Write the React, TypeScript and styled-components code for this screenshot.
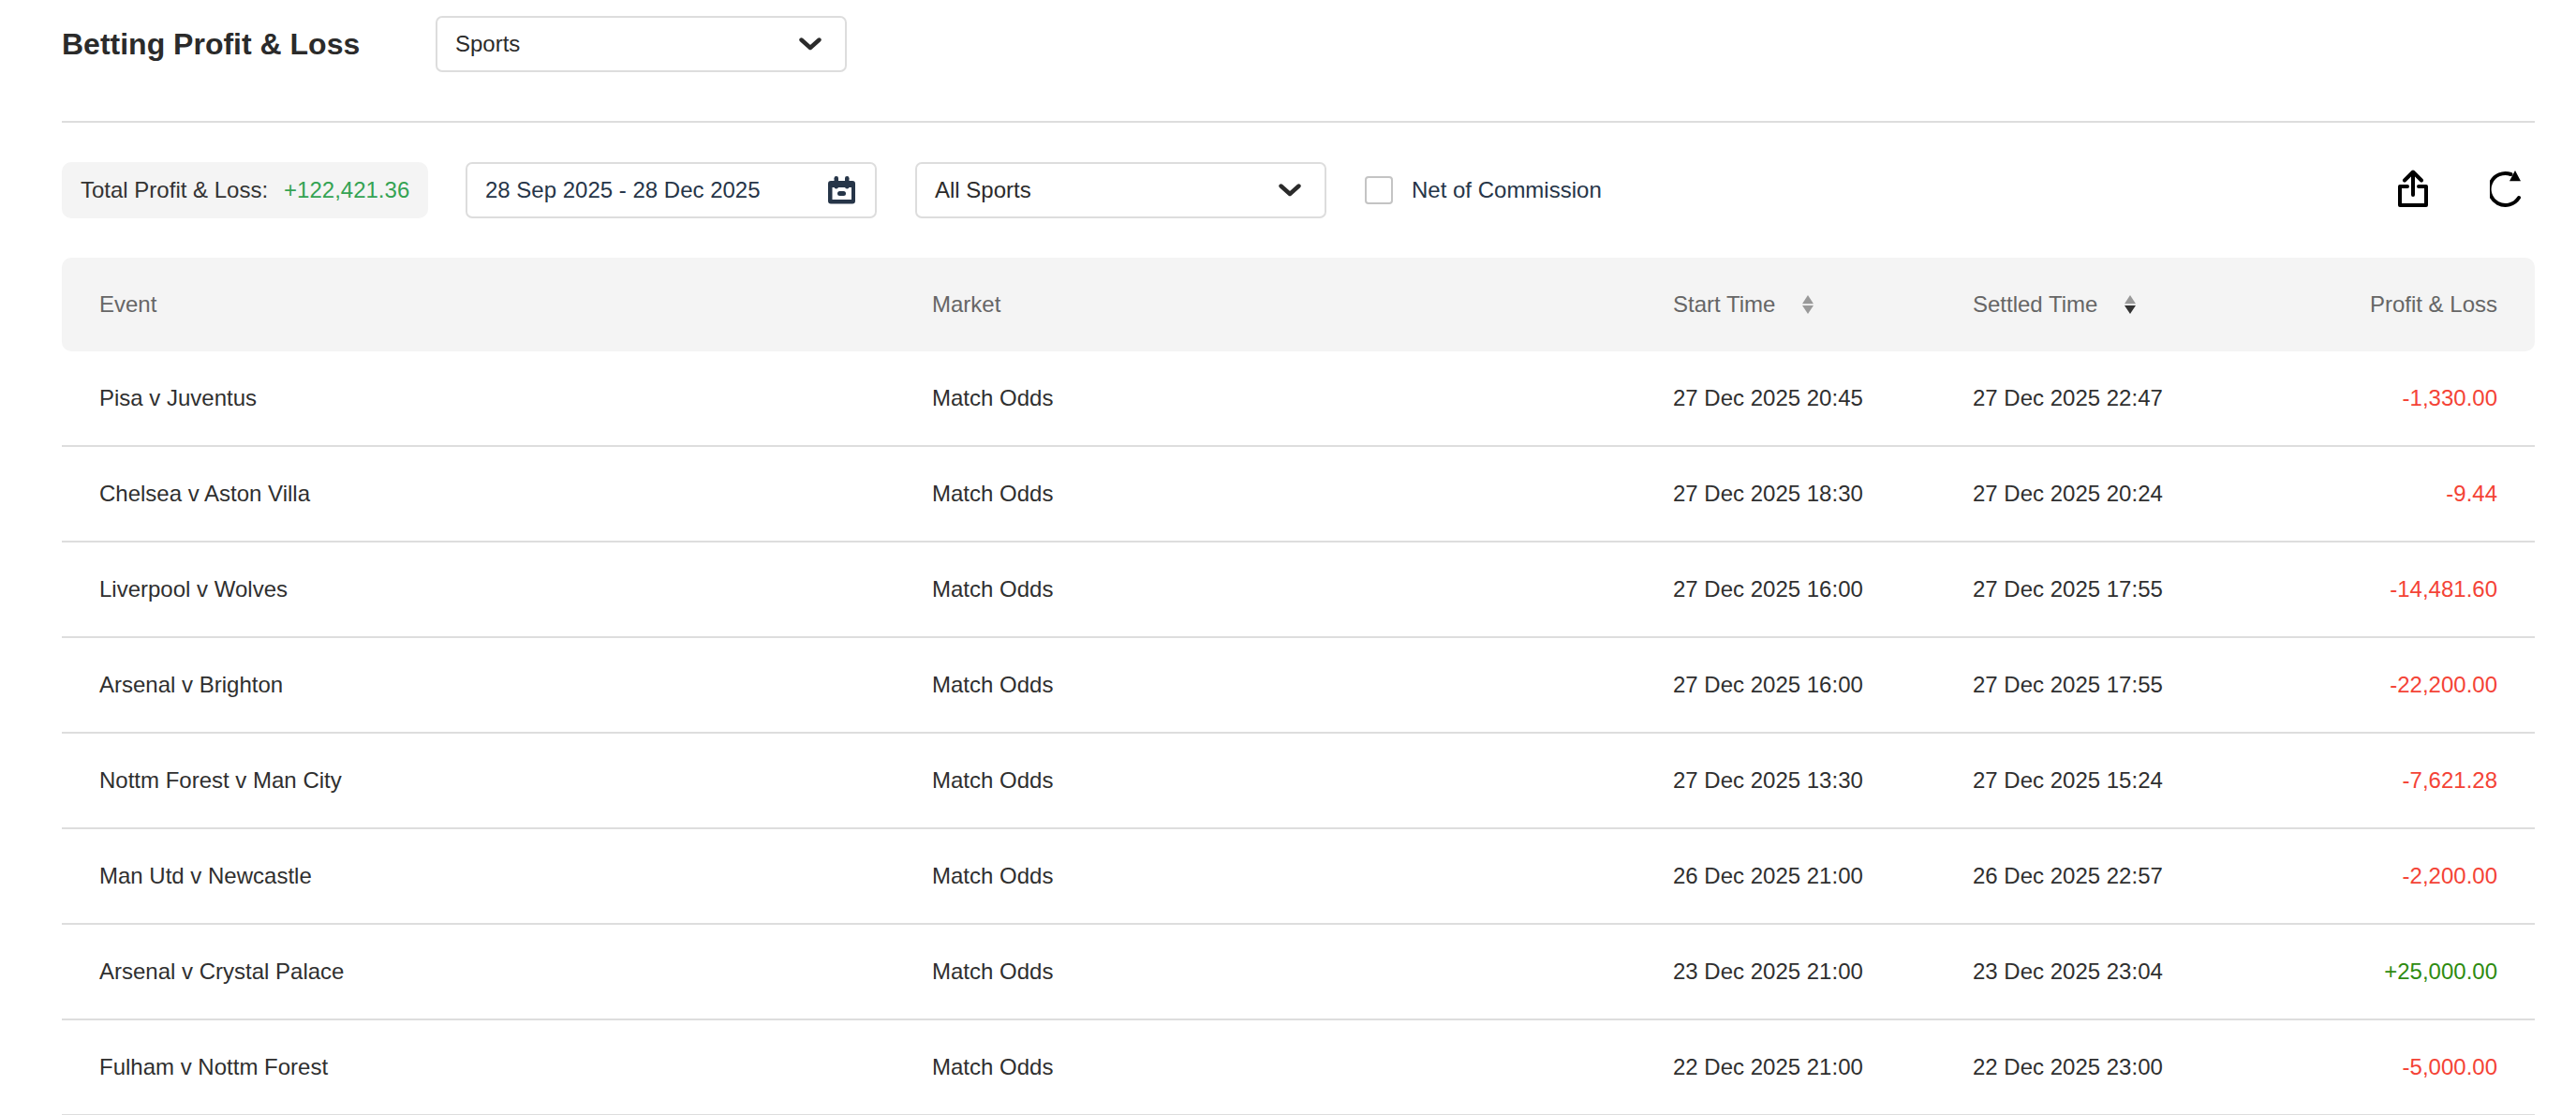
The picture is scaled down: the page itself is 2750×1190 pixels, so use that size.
import styled, { createGlobalStyle } from "styled-components";

type Row = { event: string; start: string; settled: string; pnl: string };

const rows: Row[] = [
  { event: "Pisa v Juventus", start: "27 Dec 2025 20:45", settled: "27 Dec 2025 22:47", pnl: "-1,330.00" },
  { event: "Chelsea v Aston Villa", start: "27 Dec 2025 18:30", settled: "27 Dec 2025 20:24", pnl: "-9.44" },
  { event: "Liverpool v Wolves", start: "27 Dec 2025 16:00", settled: "27 Dec 2025 17:55", pnl: "-14,481.60" },
  { event: "Arsenal v Brighton", start: "27 Dec 2025 16:00", settled: "27 Dec 2025 17:55", pnl: "-22,200.00" },
  { event: "Nottm Forest v Man City", start: "27 Dec 2025 13:30", settled: "27 Dec 2025 15:24", pnl: "-7,621.28" },
  { event: "Man Utd v Newcastle", start: "26 Dec 2025 21:00", settled: "26 Dec 2025 22:57", pnl: "-2,200.00" },
  { event: "Arsenal v Crystal Palace", start: "23 Dec 2025 21:00", settled: "23 Dec 2025 23:04", pnl: "+25,000.00" },
  { event: "Fulham v Nottm Forest", start: "22 Dec 2025 21:00", settled: "22 Dec 2025 23:00", pnl: "-5,000.00" },
];

const GlobalStyle = createGlobalStyle`
  html, body {
    margin: 0;
    height: 100%;
    overflow: hidden;
    background: #fff;
  }
  body {
    font-family: "Liberation Sans", Arial, sans-serif;
    font-size: 24px;
    color: #333;
  }
`;

const Page = styled.div`
  width: 2640px;
  margin-left: 66px;
`;

const TitleBar = styled.div`
  display: flex;
  align-items: center;
  gap: 81px;
  padding-top: 17px;
  padding-bottom: 52px;
  border-bottom: 2px solid #ddd;
`;

const Title = styled.h1`
  margin: 0;
  width: 318px;
  font-size: 32px;
  font-weight: 700;
  color: #2b2b2b;
  white-space: nowrap;
`;

const SelectBox = styled.div`
  box-sizing: border-box;
  display: flex;
  align-items: center;
  justify-content: space-between;
  width: 439px;
  height: 60px;
  padding: 0 25px 0 19px;
  border: 2px solid #ddd;
  border-radius: 7px;
  background: #fff;
  color: #2b2b2b;
`;

const Filters = styled.div`
  display: flex;
  align-items: center;
  height: 60px;
  margin-top: 42px;
  margin-bottom: 42px;
`;

const TotalPill = styled.div`
  box-sizing: border-box;
  display: flex;
  align-items: center;
  gap: 17px;
  width: 391px;
  height: 60px;
  margin-right: 40px;
  padding: 0 20px;
  border-radius: 10px;
  background: #f4f4f4;
  white-space: nowrap;
`;

const TotalValue = styled.span`
  color: #34a353;
`;

const DateBox = styled(SelectBox)`
  margin-right: 41px;
  padding-right: 21px;
  color: #263548;
`;

const FilterSelect = styled(SelectBox)`
  margin-right: 41px;
`;

const CheckLabel = styled.label`
  display: flex;
  align-items: center;
  gap: 20px;
  color: #263548;
`;

const CheckBox = styled.span`
  box-sizing: border-box;
  width: 30px;
  height: 30px;
  border: 2px solid #c4c4c4;
  border-radius: 4px;
  background: #fff;
`;

const Actions = styled.div`
  display: flex;
  align-items: center;
  gap: 66px;
  margin-left: auto;
  margin-right: 15px;
  margin-bottom: 4px;
`;

const TableHead = styled.div`
  display: grid;
  grid-template-columns: 889px 791px 320px 1fr auto;
  align-items: center;
  height: 100px;
  padding: 0 40px;
  border-radius: 10px;
  background: #f4f4f4;
  color: #666;
`;

const TableRow = styled.div`
  display: grid;
  grid-template-columns: 889px 791px 320px 1fr auto;
  align-items: center;
  height: 100px;
  padding: 0 40px;
  border-bottom: 2px solid #ddd;
  color: #2f2f2f;
`;

const SortCell = styled.div`
  display: flex;
  align-items: center;
  gap: 29px;
`;

const Amount = styled.div<{ $positive: boolean }>`
  text-align: right;
  color: ${(p) => (p.$positive ? "#2e8b10" : "#f44336")};
`;

const HeadAmount = styled.div`
  text-align: right;
`;

function Chevron() {
  return (
    <svg width="24" height="14" viewBox="0 0 24 14" fill="none">
      <path d="M2.500 2.500L12 11l9.500-8.500" stroke="#2b2b2b" strokeWidth="4.400" strokeLinecap="round" strokeLinejoin="round" />
    </svg>
  );
}

function CalendarIcon() {
  return (
    <svg width="29" height="30" viewBox="0 0 29 30">
      <path d="M3 5h23a3 3 0 0 1 3 3v18.500a3 3 0 0 1-3 3H3a3 3 0 0 1-3-3V8a3 3 0 0 1 3-3zM4.500 12v13H25V12H4.500z" fill="#263548" fillRule="evenodd" />
      <rect x="6.500" y="0" width="4.500" height="13.500" rx="2.200" fill="#263548" />
      <rect x="18" y="0" width="4.500" height="13.500" rx="2.200" fill="#263548" />
      <rect x="10" y="16" width="9" height="5" rx="2.500" fill="#263548" />
    </svg>
  );
}

function SortIcon({ active }: { active?: boolean }) {
  return (
    <svg width="12" height="20" viewBox="0 0 12 20">
      <path d="M6 0L12 9.200H0z" fill="#999" />
      <path d="M6 20L0 11H12z" fill={active ? "#333" : "#999"} />
    </svg>
  );
}

function ShareIcon() {
  return (
    <svg width="32" height="40" viewBox="0 0 32 40" fill="none" stroke="#000" strokeWidth="4" strokeLinejoin="round" strokeLinecap="round">
      <path d="M10 18H2v20h28V18h-8" />
      <path d="M16 27V3M7 11.500l9-9 9 9" />
    </svg>
  );
}

function RefreshIcon() {
  return (
    <svg width="33" height="39" viewBox="0 0 33 39" fill="none">
      <path d="M31 29A17 17 0 1 1 22.500 4" stroke="#000" strokeWidth="4" strokeLinecap="round" />
      <path d="M27 0L33 11.300H21z" fill="#000" />
    </svg>
  );
}

export default function App() {
  return (
    <Page>
      <GlobalStyle />
      <TitleBar>
        <Title>Betting Profit &amp; Loss</Title>
        <SelectBox>
          Sports
          <Chevron />
        </SelectBox>
      </TitleBar>

      <Filters>
        <TotalPill>
          <span>Total Profit &amp; Loss:</span>
          <TotalValue>+122,421.36</TotalValue>
        </TotalPill>
        <DateBox>
          28 Sep 2025 - 28 Dec 2025
          <CalendarIcon />
        </DateBox>
        <FilterSelect>
          All Sports
          <Chevron />
        </FilterSelect>
        <CheckLabel>
          <CheckBox />
          Net of Commission
        </CheckLabel>
        <Actions>
          <ShareIcon />
          <RefreshIcon />
        </Actions>
      </Filters>

      <TableHead>
        <div>Event</div>
        <div>Market</div>
        <SortCell>
          Start Time
          <SortIcon />
        </SortCell>
        <SortCell>
          Settled Time
          <SortIcon active />
        </SortCell>
        <HeadAmount>Profit &amp; Loss</HeadAmount>
      </TableHead>

      {rows.map((r) => (
        <TableRow key={r.event}>
          <div>{r.event}</div>
          <div>Match Odds</div>
          <div>{r.start}</div>
          <div>{r.settled}</div>
          <Amount $positive={r.pnl.startsWith("+")}>{r.pnl}</Amount>
        </TableRow>
      ))}
    </Page>
  );
}
